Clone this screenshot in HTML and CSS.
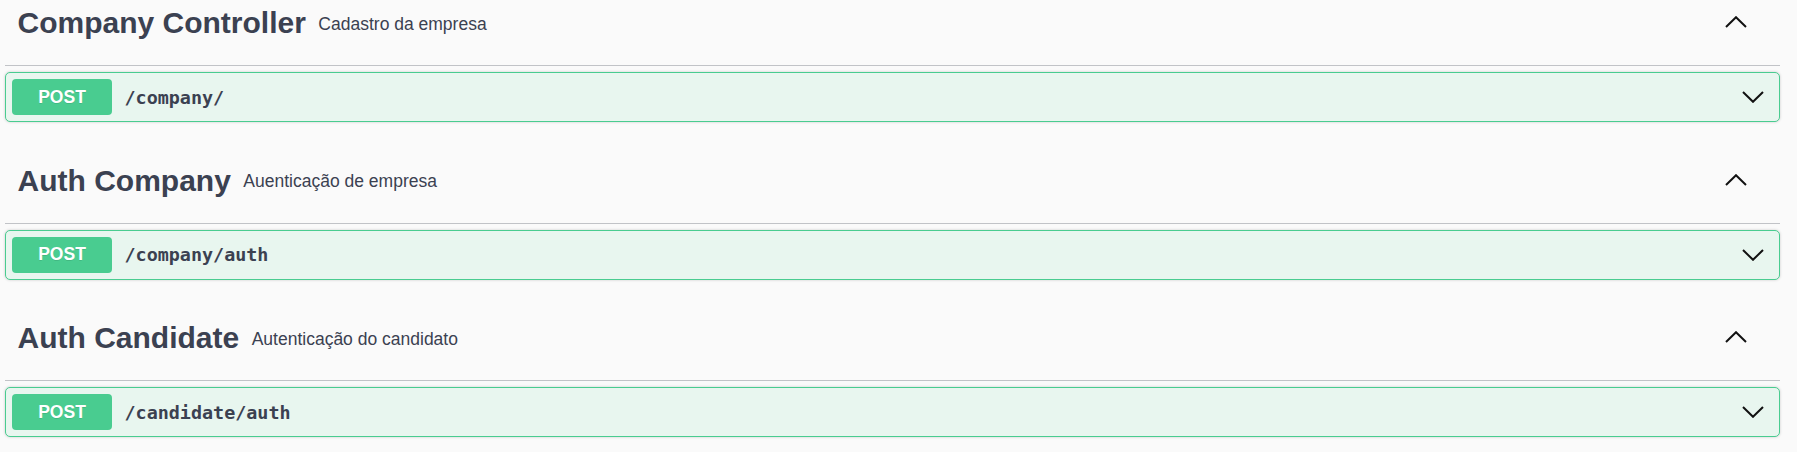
FILE: index.html
```html
<!DOCTYPE html>
<html>
<head>
<meta charset="utf-8">
<link rel="stylesheet" href="styles.css">
</head>
<body>
<div class="wrapper">
  <section class="tag-section">
    <div class="tag-header">
      <span class="tag-title">Company Controller</span>
      <small class="tag-desc">Cadastro da empresa</small>
      <span class="spacer"></span>
      <svg class="chev-up" width="22" height="12" viewBox="0 0 22 12"><polyline points="1,11 11,1.2 21,11" /></svg>
    </div>
    <div class="opblock">
      <span class="method">POST</span>
      <span class="path">/company/</span>
      <span class="spacer"></span>
      <svg class="chev-down" width="22" height="12" viewBox="0 0 22 12"><polyline points="1,1 11,10.8 21,1" /></svg>
    </div>
  </section>
  <section class="tag-section">
    <div class="tag-header">
      <span class="tag-title">Auth Company</span>
      <small class="tag-desc">Auenticação de empresa</small>
      <span class="spacer"></span>
      <svg class="chev-up" width="22" height="12" viewBox="0 0 22 12"><polyline points="1,11 11,1.2 21,11" /></svg>
    </div>
    <div class="opblock">
      <span class="method">POST</span>
      <span class="path">/company/auth</span>
      <span class="spacer"></span>
      <svg class="chev-down" width="22" height="12" viewBox="0 0 22 12"><polyline points="1,1 11,10.8 21,1" /></svg>
    </div>
  </section>
  <section class="tag-section">
    <div class="tag-header">
      <span class="tag-title">Auth Candidate</span>
      <small class="tag-desc">Autenticação do candidato</small>
      <span class="spacer"></span>
      <svg class="chev-up" width="22" height="12" viewBox="0 0 22 12"><polyline points="1,11 11,1.2 21,11" /></svg>
    </div>
    <div class="opblock">
      <span class="method">POST</span>
      <span class="path">/candidate/auth</span>
      <span class="spacer"></span>
      <svg class="chev-down" width="22" height="12" viewBox="0 0 22 12"><polyline points="1,1 11,10.8 21,1" /></svg>
    </div>
  </section>
</div>
</body>
</html>
```

FILE: styles.css
```css
html, body {
  margin: 0;
  padding: 0;
  background: #fafafa;
  overflow: hidden;
}

.wrapper {
  margin: -16px 17px 0 5px;
  font-family: "Liberation Sans", Arial, sans-serif;
  color: #3b4151;
}

.tag-section {
  display: flex;
  flex-direction: column;
}

.tag-header {
  display: flex;
  align-items: center;
  height: 78px;
  padding: 0 33px 3px 12.5px;
  border-bottom: 1px solid #c1c3c7;
}

.tag-title {
  font-size: 30px;
  font-weight: bold;
  line-height: 34px;
}

.tag-desc {
  font-size: 17.5px;
  padding: 0 12.5px;
  line-height: 20px;
  margin-top: 1px;
}

.spacer {
  flex: 1;
}

.chev-up polyline,
.chev-down polyline {
  fill: none;
  stroke: #111;
  stroke-width: 2;
}

.chev-up {
  margin-top: -2px;
}

.opblock {
  display: flex;
  align-items: center;
  margin: 6px 0 19.5px;
  padding: 6px 15px 6px 6px;
  border: 1px solid #49cc90;
  border-radius: 5px;
  background: #e8f6ef;
  box-shadow: 0 0 3px rgba(0, 0, 0, 0.19);
}

.method {
  width: 100px;
  height: 36px;
  display: flex;
  align-items: center;
  justify-content: center;
  background: #49cc90;
  color: #fff;
  font-size: 17.5px;
  font-weight: bold;
  border-radius: 4px;
  text-shadow: 0 1px 0 rgba(0, 0, 0, 0.1);
}

.path {
  padding: 0 12.5px;
  font-family: "DejaVu Sans Mono", "Liberation Mono", monospace;
  font-size: 18.4px;
  font-weight: bold;
  color: #3b4151;
}
```
